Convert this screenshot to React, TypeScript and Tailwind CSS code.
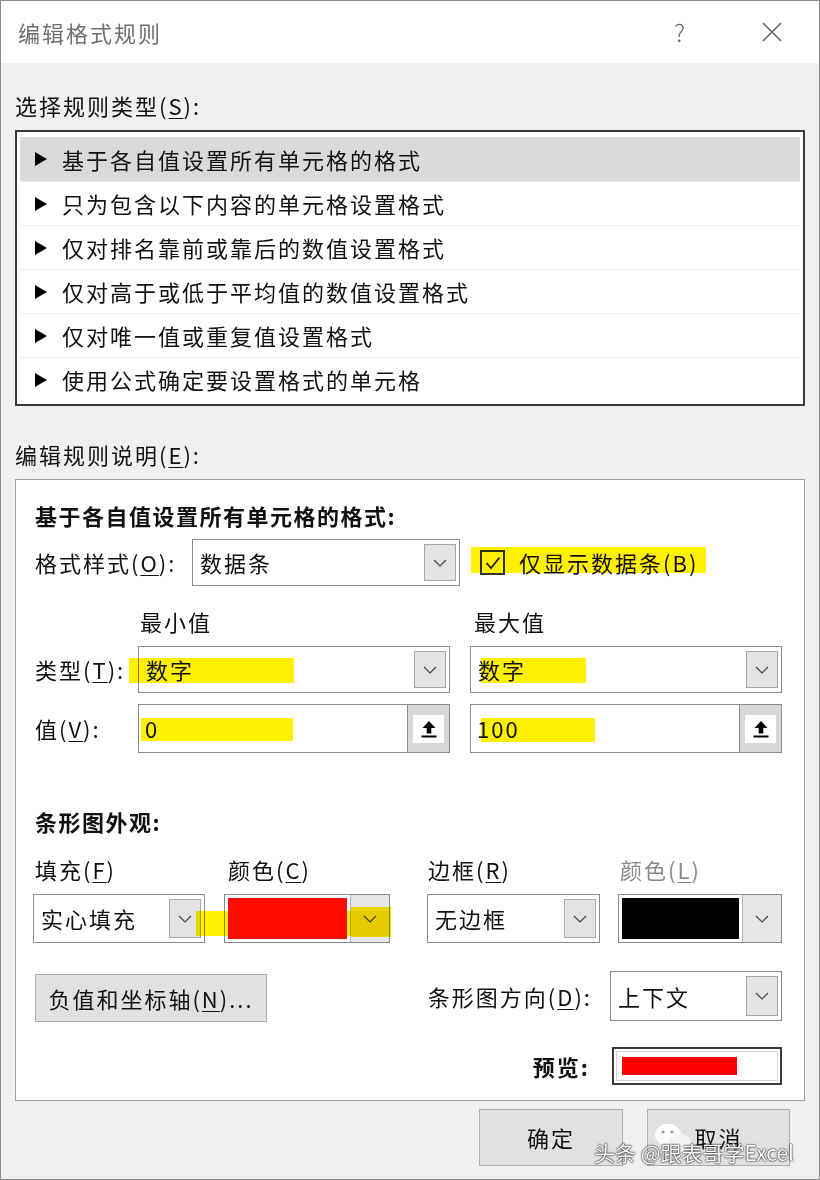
import React from 'react';

const rules = [
  '基于各自值设置所有单元格的格式',
  '只为包含以下内容的单元格设置格式',
  '仅对排名靠前或靠后的数值设置格式',
  '仅对高于或低于平均值的数值设置格式',
  '仅对唯一值或重复值设置格式',
  '使用公式确定要设置格式的单元格',
];

function Chevron() {
  return (
    <svg width="14" height="8" viewBox="0 0 14 8">
      <path d="M1 1l6 6 6-6" fill="none" stroke="#444" strokeWidth="1.2" />
    </svg>
  );
}

function UpArrow() {
  return (
    <svg width="18" height="20" viewBox="0 0 18 20">
      <path d="M9 2L2.5 9h4.2v5.5h4.6V9h4.2z" fill="#000" />
      <rect x="1.5" y="16.5" width="15" height="2" fill="#000" />
    </svg>
  );
}

function Mn({ c }: { c: string }) {
  return <span className="underline underline-offset-[3px] decoration-1">{c}</span>;
}

function Select({ text, w, h = 'h-[47px]' }: { text: string; w: string; h?: string }) {
  return (
    <div className={`flex ${w} ${h} border border-[#8c8c8c] bg-white`}>
      <div className="flex flex-1 items-center pl-[7px]">{text}</div>
      <div className="my-[4px] mr-[3px] flex w-[32px] items-center justify-center border border-[#a8a8a8] bg-[#e3e3e3]">
        <Chevron />
      </div>
    </div>
  );
}

function SpinInput({ text }: { text: string }) {
  return (
    <div className="flex h-[49px] w-[312px] border border-[#8c8c8c] bg-white">
      <div className="flex flex-1 items-center pl-[6px]">{text}</div>
      <div className="flex w-[42px] items-center justify-center border-l border-[#8c8c8c] bg-[#d8d8d8]">
        <div className="flex h-[28px] w-[31px] items-center justify-center bg-white">
          <UpArrow />
        </div>
      </div>
    </div>
  );
}

function ColorSelect({ color, w }: { color: string; w: string }) {
  return (
    <div className={`flex ${w} h-[49px] border border-[#8c8c8c] bg-white`}>
      <div className="flex flex-1 p-[3px]">
        <div className={`flex-1 ${color}`} />
      </div>
      <div className="flex w-[39px] items-center justify-center border-l border-[#b0b0b0] bg-[#e6e6e6]">
        <Chevron />
      </div>
    </div>
  );
}

export default function App() {
  return (
    <div className="relative h-[1180px] w-[820px] overflow-hidden border-x border-y border-[#8a8a8a] bg-[#f0f0f0] text-[22px] tracking-[2px] text-[#111] font-[family-name:'Noto_Sans_CJK_SC','Noto_Sans',sans-serif]">
      {/* title bar */}
      <div className="flex h-[62px] items-center justify-between bg-white pl-[17px] pr-[36px]">
        <span className="text-[22px] text-[#6f6f6f]">编辑格式规则</span>
        <div className="flex items-center gap-[74px]">
          <span className="text-[24px] font-light text-[#666]">?</span>
          <svg width="22" height="22" viewBox="0 0 22 22">
            <path d="M2 2l18 18M20 2L2 20" stroke="#555" strokeWidth="1.3" />
          </svg>
        </div>
      </div>

      <div className="px-[14px]">
        <div className="mt-[28px] h-[28px] leading-[28px]">
          选择规则类型(<Mn c="S" />):
        </div>

        {/* rule type list */}
        <div className="mt-[11px] h-[276px] border-2 border-[#3c3c3c] bg-white px-[3px] pt-[5px]">
          {rules.map((r, i) => (
            <div
              key={r}
              className={`flex h-[44px] items-center pl-[15px] ${i === 0 ? 'bg-[#dadada]' : 'border-t border-[#ebebeb]'}`}
            >
              <svg width="12" height="14" viewBox="0 0 12 14" className="mr-[15px]">
                <path d="M0 0l12 7-12 7z" fill="#000" />
              </svg>
              <span>{r}</span>
            </div>
          ))}
        </div>

        <div className="mt-[34px] h-[28px] leading-[28px]">
          编辑规则说明(<Mn c="E" />):
        </div>

        {/* description panel */}
        <div className="mt-[11px] h-[622px] border border-[#a2a2a2] bg-white pl-[19px] pr-[22px]">
          <div className="mt-[21px] h-[28px] font-bold leading-[28px] tracking-[1.5px]">基于各自值设置所有单元格的格式:</div>

          <div className="mt-[10px] flex h-[47px] items-center">
            <div className="w-[157px]">
              格式样式(<Mn c="O" />):
            </div>
            <Select text="数据条" w="w-[268px]" />
            <div className="ml-[20px] flex h-[25px] w-[25px] items-center justify-center border-2 border-[#333]">
              <svg width="16" height="14" viewBox="0 0 16 14">
                <path d="M1.5 7l4.5 5L14.5 1.5" fill="none" stroke="#222" strokeWidth="1.8" />
              </svg>
            </div>
            <span className="ml-[14px]">仅显示数据条(B)</span>
          </div>

          <div className="mt-[21px] flex h-[28px] items-center leading-[28px]">
            <div className="w-[105px]" />
            <div className="w-[312px]">最小值</div>
            <div className="ml-[22px]">最大值</div>
          </div>

          <div className="mt-[11px] flex items-center gap-[20px]">
            <div className="-mr-[20px] w-[103px]">
              类型(<Mn c="T" />):
            </div>
            <Select text="数字" w="w-[312px]" />
            <Select text="数字" w="w-[312px]" />
          </div>

          <div className="mt-[11px] flex items-center gap-[20px]">
            <div className="-mr-[20px] w-[103px]">
              值(<Mn c="V" />):
            </div>
            <SpinInput text="0" />
            <SpinInput text="100" />
          </div>

          <div className="mt-[54px] h-[28px] font-bold leading-[28px] tracking-[1.5px]">条形图外观:</div>

          <div className="-ml-[2px] mt-[20px] flex h-[28px] leading-[28px]">
            <div className="w-[191px] pl-[2px]">
              填充(<Mn c="F" />)
            </div>
            <div className="w-[203px] pl-[4px]">
              颜色(<Mn c="C" />)
            </div>
            <div className="w-[191px] pl-[1px]">
              边框(<Mn c="R" />)
            </div>
            <div className="pl-[2px] text-[#8a8a8a]">
              颜色(<Mn c="L" />)
            </div>
          </div>

          <div className="-ml-[2px] mt-[11px] flex">
            <Select text="实心填充" w="w-[172px]" h="h-[49px]" />
            <div className="ml-[19px]">
              <ColorSelect color="bg-[#ff0d00]" w="w-[166px]" />
            </div>
            <div className="ml-[37px]">
              <Select text="无边框" w="w-[173px]" h="h-[49px]" />
            </div>
            <div className="ml-[18px]">
              <ColorSelect color="bg-black" w="w-[164px]" />
            </div>
          </div>

          <div className="mt-[28px] flex items-start justify-between">
            <button className="mt-[3px] h-[48px] w-[232px] border border-[#adadad] bg-[#e1e1e1] text-[22px] tracking-[2px]">
              负值和坐标轴(<Mn c="N" />)...
            </button>
            <div className="flex items-center">
              <span className="mr-[18px]">
                条形图方向(<Mn c="D" />):
              </span>
              <Select text="上下文" w="w-[172px]" h="h-[50px]" />
            </div>
          </div>

          <div className="mt-[25px] flex items-center justify-end">
            <span className="font-bold">预览:</span>
            <div className="ml-[22px] flex h-[38px] w-[170px] border-2 border-[#3a3a3a] bg-white p-[2px]">
              <div className="flex flex-1 border border-[#d4d4d4] py-[5px] pl-[5px]">
                <div className="w-[115px] bg-[#ff0000]" />
              </div>
            </div>
          </div>
        </div>

        {/* dialog buttons */}
        <div className="mr-[15px] mt-[8px] flex justify-end gap-[24px]">
          <button className="h-[57px] w-[144px] border border-[#adadad] bg-[#e1e1e1] text-[22px] tracking-[2px]">确定</button>
          <button className="h-[57px] w-[143px] border border-[#adadad] bg-[#e1e1e1] text-[22px] tracking-[2px]">取消</button>
        </div>
      </div>

      {/* highlighter marks */}
      <div className="absolute left-[470px] top-[546px] h-[26px] w-[235px] bg-[#fff000] mix-blend-multiply blur-[0.6px]" />
      <div className="absolute left-[128px] top-[657px] h-[25px] w-[165px] bg-[#fff000] mix-blend-multiply blur-[0.6px]" />
      <div className="absolute left-[480px] top-[657px] h-[25px] w-[105px] bg-[#fff000] mix-blend-multiply blur-[0.6px]" />
      <div className="absolute left-[140px] top-[717px] h-[23px] w-[152px] bg-[#fff000] mix-blend-multiply blur-[0.6px]" />
      <div className="absolute left-[480px] top-[717px] h-[24px] w-[114px] bg-[#fff000] mix-blend-multiply blur-[0.6px]" />
      <div className="absolute left-[195px] top-[910px] h-[25px] w-[195px] bg-[#fff000] mix-blend-multiply blur-[0.6px]" />
      <div className="absolute left-[350px] top-[906px] h-[30px] w-[40px] bg-[#fff000] mix-blend-multiply blur-[0.6px]" />

      {/* watermark */}
      <svg width="40" height="32" viewBox="0 0 40 32" className="absolute left-[652px] top-[1121px] opacity-90">
        <ellipse cx="15" cy="13" rx="13" ry="11" fill="#fff" />
        <ellipse cx="27" cy="21" rx="11" ry="9" fill="#f4f4f4" />
        <circle cx="10" cy="10" r="1.6" fill="#999" />
        <circle cx="19" cy="10" r="1.6" fill="#999" />
      </svg>
      <div className="absolute left-[593px] top-[1136px] text-[21px] tracking-[0px] text-white [text-shadow:0_0_2px_#000,0_0_1px_#000]">
        头条 @跟表哥学Excel
      </div>
    </div>
  );
}
